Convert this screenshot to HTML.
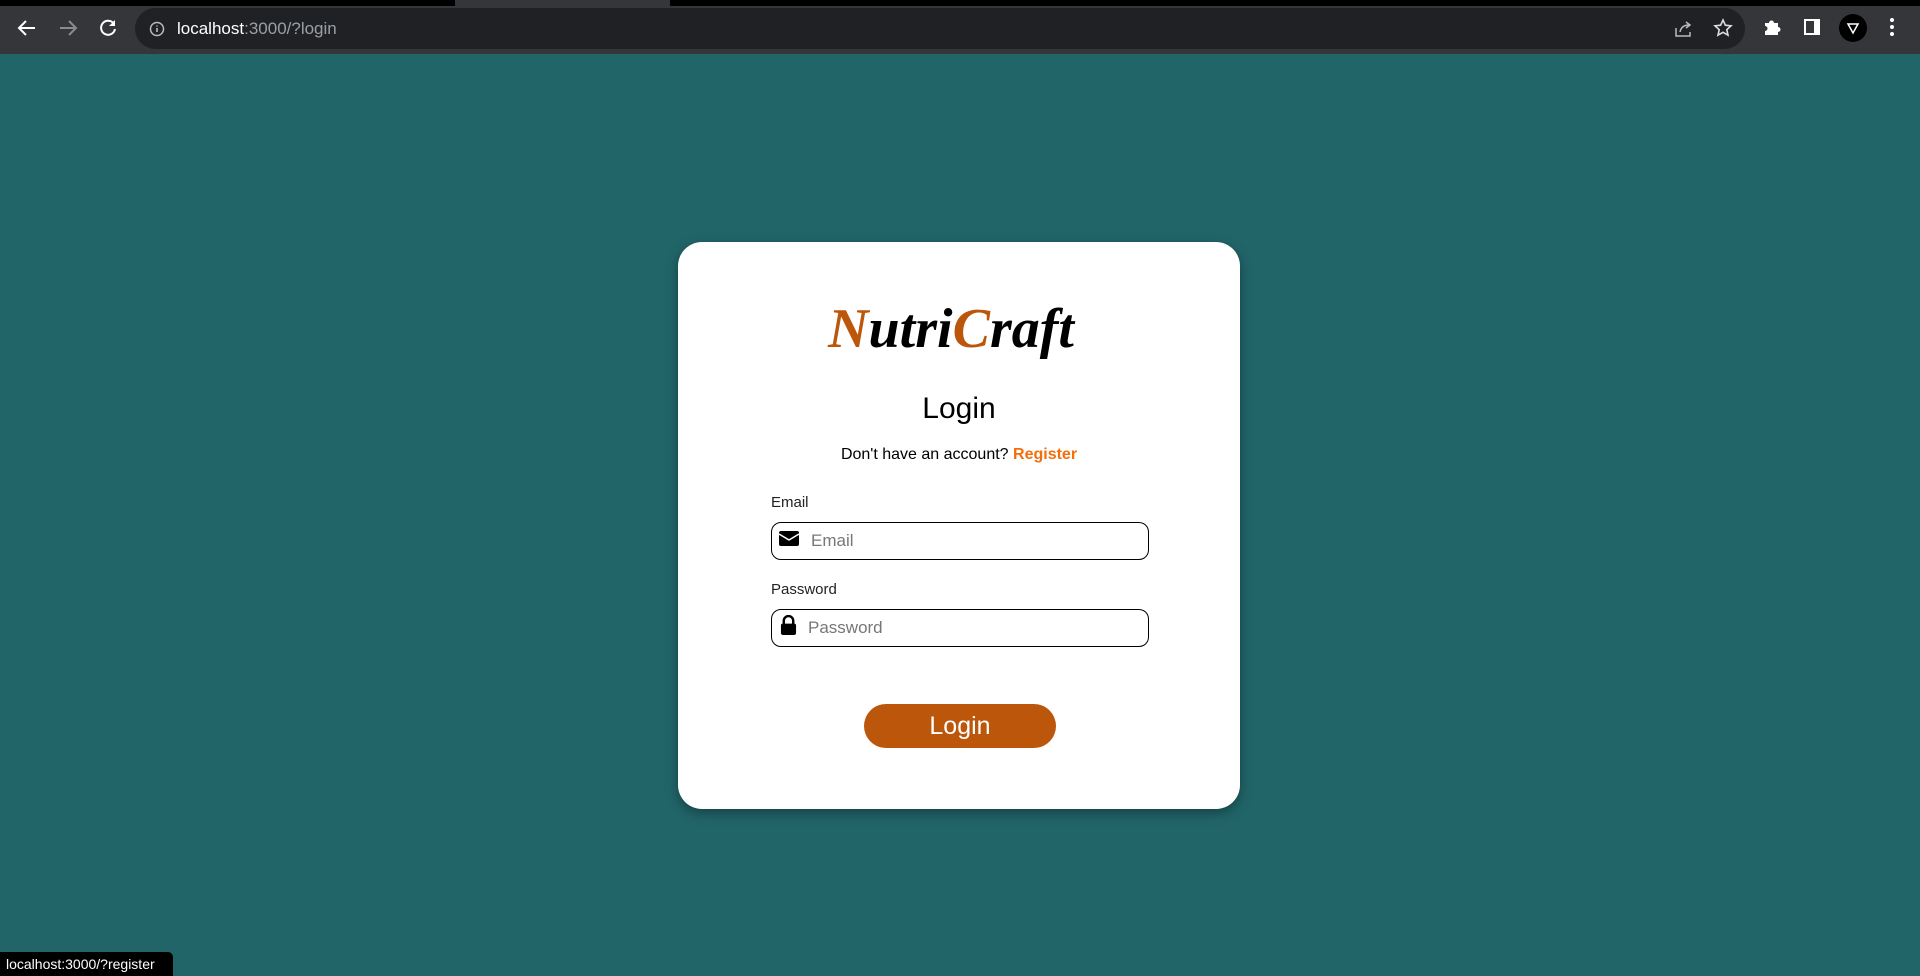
<!DOCTYPE html>
<html><head><meta charset="utf-8"><style>
*{box-sizing:border-box;margin:0;padding:0}
body{width:1920px;height:976px;overflow:hidden;background:#216569;font-family:"Liberation Sans",sans-serif;position:relative}
.top{position:absolute;left:0;top:0;width:1920px;height:54px;background:#35363a}
.tabs{position:absolute;left:0;top:0;width:1920px;height:6px;background:#000}
.tabs .t{position:absolute;left:455px;top:0;width:215px;height:6px;background:#35363a}
.url{position:absolute;left:135px;top:8px;width:1610px;height:41px;background:#202124;border-radius:21px}
.url span{position:absolute;left:42px;top:11px;font-size:17px;color:#fff}
.url span i{font-style:normal;color:#9aa0a6}
.ico{position:absolute}
.card{position:absolute;left:678px;top:242px;width:562px;height:567px;background:#fff;border-radius:24px;box-shadow:0 4px 12px rgba(0,0,0,.35)}
.logo{position:absolute;left:670px;width:562px;top:297px;text-align:center;font-family:"Liberation Serif",serif;font-style:italic;font-weight:bold;font-size:56px;color:#000}
.o{color:#bb560b}
.h{position:absolute;left:678px;width:562px;top:392px;text-align:center;font-size:30px;color:#000}
.sub{position:absolute;left:678px;width:562px;top:446px;text-align:center;font-size:16px;color:#000}
.sub b{color:#f46f0b;font-weight:bold}
.lbl{position:absolute;left:771px;font-size:15px;color:#222}
.inp{position:absolute;left:771px;width:378px;height:38px;border:1.5px solid #000;border-radius:10px;background:#fff}
.ph{position:absolute;font-size:17px;color:#777;top:8px}
.btn{position:absolute;left:864px;top:704px;width:192px;height:44px;background:#bb560b;border-radius:22px;color:#fff;font-size:25px;text-align:center;line-height:44px}
.status{position:absolute;left:0;top:952px;width:173px;height:24px;background:#000;border-radius:0 5px 0 0;color:#fff;font-size:14px;line-height:24px;padding-left:6px}
</style></head><body>
<div class="top"><div class="tabs"><div class="t"></div></div>
<svg class="ico" style="left:16px;top:17px" width="22" height="22" viewBox="0 0 22 22"><path d="M19 11H4M10 4l-7 7 7 7" stroke="#fff" stroke-width="2" fill="none"/></svg>
<svg class="ico" style="left:57px;top:17px" width="22" height="22" viewBox="0 0 22 22"><path d="M3 11h15M12 4l7 7-7 7" stroke="#8a8b8e" stroke-width="2" fill="none"/></svg>
<svg class="ico" style="left:97px;top:17px" width="22" height="22" viewBox="0 0 22 22"><path d="M17 7A7 7 0 1 0 18 12" stroke="#fff" stroke-width="2" fill="none"/><path d="M18 3v6h-6z" fill="#fff"/></svg>
<div class="url">
<svg class="ico" style="left:14px;top:13px" width="16" height="16" viewBox="0 0 16 16"><circle cx="8" cy="8" r="6.5" stroke="#bbb" stroke-width="1.5" fill="none"/><path d="M8 7v4M8 4.5v1" stroke="#bbb" stroke-width="1.6"/></svg>
<span>localhost<i>:3000/?login</i></span>
<svg class="ico" style="left:1538px;top:11px" width="20" height="20" viewBox="0 0 20 20"><path d="M3 9v8h14v-4M7 13c1-5 4-7 9-7M13 3l4 3-4 3" stroke="#bbb" stroke-width="1.5" fill="none"/></svg>
<svg class="ico" style="left:1578px;top:10px" width="20" height="20" viewBox="0 0 20 20"><path d="M10 2l2.4 5.2 5.6.6-4.2 3.8 1.2 5.6L10 14.3 5 17.2l1.2-5.6L2 7.8l5.6-.6z" stroke="#ddd" stroke-width="1.6" fill="none"/></svg>
</div>
<svg class="ico" style="left:1762px;top:17px" width="20" height="20" viewBox="0 0 20 20"><path d="M3 6h4a2.5 2.5 0 0 1 5 0h4v4a2.5 2.5 0 0 1 0 5v3H3v-4a2.5 2.5 0 0 0 0-5z" fill="#fff"/></svg>
<svg class="ico" style="left:1803px;top:18px" width="18" height="18" viewBox="0 0 18 18"><rect x="1" y="1" width="16" height="16" fill="#fff"/><rect x="3" y="3" width="8" height="12" fill="#35363a"/></svg>
<svg class="ico" style="left:1839px;top:14px" width="28" height="28" viewBox="0 0 28 28"><circle cx="14" cy="14" r="14" fill="#000"/><path d="M9 10h10l-5 9z" stroke="#fff" stroke-width="1.5" fill="none"/></svg>
<svg class="ico" style="left:1889px;top:17px" width="6" height="20" viewBox="0 0 6 20"><circle cx="3" cy="3" r="2" fill="#fff"/><circle cx="3" cy="10" r="2" fill="#fff"/><circle cx="3" cy="17" r="2" fill="#fff"/></svg>
</div>
<div class="card"></div>
<div class="logo"><span class="o">N</span>utri<span class="o">C</span>raft</div>
<div class="h">Login</div>
<div class="sub">Don't have an account? <b>Register</b></div>
<div class="lbl" style="top:494px">Email</div>
<div class="inp" style="top:522px">
<svg class="ico" style="left:7px;top:8px" width="20" height="15" viewBox="0 0 20 15"><rect x="0" y="0" width="20" height="15" rx="2" fill="#000"/><path d="M0 3l10 6 10-6" stroke="#fff" stroke-width="1.6" fill="none"/></svg>
<div class="ph" style="left:39px">Email</div></div>
<div class="lbl" style="top:581px">Password</div>
<div class="inp" style="top:609px">
<svg class="ico" style="left:8px;top:5px" width="17" height="21" viewBox="0 0 18 22"><path d="M4 10V6a5 5 0 0 1 10 0v4" stroke="#000" stroke-width="2.6" fill="none"/><rect x="1" y="9" width="16" height="12" rx="2" fill="#000"/></svg>
<div class="ph" style="left:36px">Password</div></div>
<div class="btn">Login</div>
<div class="status">localhost:3000/?register</div>
</body></html>
